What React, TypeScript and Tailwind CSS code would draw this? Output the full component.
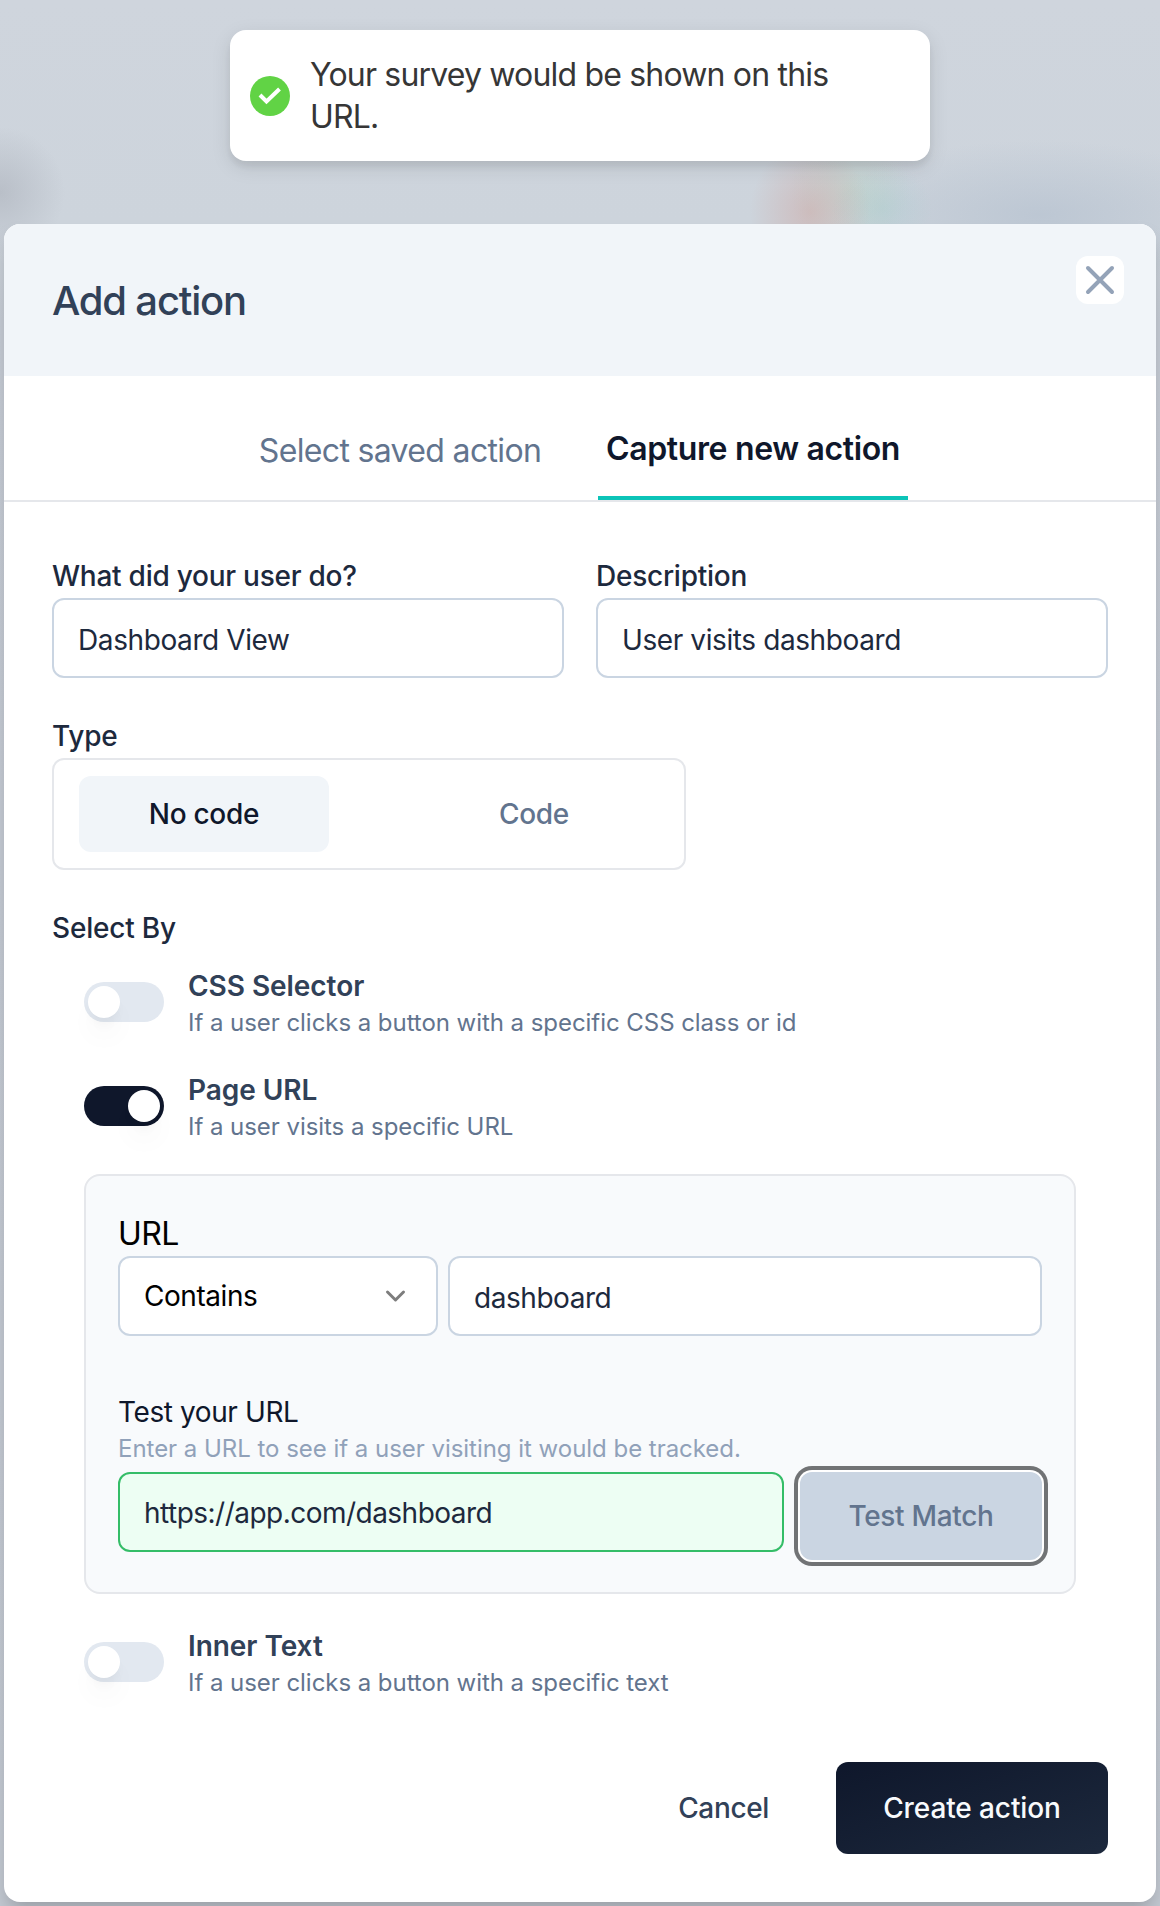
import React from "react";

function Toast() {
  return (
    <div className="flex h-[131px] w-[700px] shrink-0 items-center rounded-2xl bg-white pl-5 shadow-[0_6px_20px_rgba(0,0,0,0.1),0_6px_6px_rgba(0,0,0,0.06)]">
      <div className="flex h-10 w-10 shrink-0 items-center justify-center rounded-full bg-[#61d345]">
        <svg width="24" height="20" viewBox="0 0 24 20" fill="none">
          <path d="M2 9L8.5 15.5L21.5 3" stroke="white" strokeWidth="4" />
        </svg>
      </div>
      <p className="ml-5 w-[560px] text-[32px] leading-[42px] tracking-[-0.82px] text-[#363636]">
        Your survey would be shown on this URL.
      </p>
    </div>
  );
}

function Field({ label, value }: { label: string; value: string }) {
  return (
    <div className="w-[512px]">
      <div className="h-10 text-[28px] leading-10 font-medium tracking-[-0.25px] text-slate-800">
        {label}
      </div>
      <div className="mt-[2px] flex h-20 items-center rounded-xl border-2 border-slate-300 bg-white px-6 text-[28px] tracking-[-0.4px] text-slate-800">
        <span className="mt-[3px]">{value}</span>
      </div>
    </div>
  );
}

function Switch({ on }: { on?: boolean }) {
  return (
    <div
      className={
        on
          ? "flex h-10 w-20 shrink-0 items-center justify-end rounded-full bg-slate-900 p-1"
          : "flex h-10 w-20 shrink-0 items-center rounded-full bg-slate-200 p-1"
      }
    >
      <div className="h-8 w-8 rounded-full bg-white shadow-[0_20px_30px_-6px_rgba(0,0,0,0.07),0_8px_12px_-4px_rgba(0,0,0,0.05)]" />
    </div>
  );
}

function Option({ title, text, on }: { title: string; text: string; on?: boolean }) {
  return (
    <div className="flex h-[72px] items-center pl-8">
      <Switch on={on} />
      <div className="ml-6">
        <div className="h-[41px] text-[28px] leading-10 font-semibold tracking-[-0.05px] text-slate-700">
          {title}
        </div>
        <div className="h-[31px] text-[24px] leading-8 tracking-[-0.05px] text-slate-500">{text}</div>
      </div>
    </div>
  );
}

export default function App() {
  return (
    <div className="flex h-[1906px] w-[1160px] flex-col items-center overflow-hidden bg-[radial-gradient(60px_70px_at_810px_212px,rgba(206,165,160,0.5),transparent),radial-gradient(60px_60px_at_850px_190px,rgba(180,208,185,0.35),transparent),radial-gradient(50px_45px_at_882px_208px,rgba(165,205,208,0.4),transparent),radial-gradient(65px_65px_at_0px_192px,rgba(165,170,180,0.5),transparent),radial-gradient(210px_75px_at_1040px_215px,rgba(175,188,204,0.55),transparent),linear-gradient(#cfd5dd,#cdd4dc_224px,#c6ccd5_320px,#c3c9d2)] pt-[30px] font-['Inter',sans-serif]">
      <Toast />
      <div className="mt-[63px] h-[1678px] w-[1152px] shrink-0 overflow-hidden rounded-2xl bg-white shadow-[0_12px_20px_-4px_rgba(0,0,0,0.22)]">
        <header className="flex h-[152px] items-start justify-between bg-slate-100 pr-8 pl-12">
          <h1 className="mt-[49px] text-[40px] leading-[56px] font-medium tracking-[-1.2px] text-slate-700">
            Add action
          </h1>
          <button className="mt-8 flex h-12 w-12 items-center justify-center rounded-xl bg-white">
            <svg width="32" height="32" viewBox="0 0 32 32" fill="none">
              <path d="M4 4L28 28M28 4L4 28" stroke="#94a3b8" strokeWidth="4" strokeLinecap="round" />
            </svg>
          </button>
        </header>

        <nav className="flex h-[126px] items-end border-b-2 border-gray-200 pl-[241px]">
          <div className="flex h-[98px] w-[310px] items-center justify-center text-[32px] tracking-[-0.66px] text-slate-500">
            Select saved action
          </div>
          <div className="ml-[43px] flex h-[98px] w-[310px] items-center justify-center border-b-4 border-[#0cc4b8] text-[32px] font-semibold tracking-[-0.35px] text-slate-900">
            Capture new action
          </div>
        </nav>

        <div className="px-12 pt-[54px]">
          <div className="flex gap-8">
            <Field label="What did your user do?" value="Dashboard View" />
            <Field label="Description" value="User visits dashboard" />
          </div>

          <div className="mt-[38px] h-10 text-[28px] leading-10 font-medium tracking-[-0.25px] text-slate-800">
            Type
          </div>
          <div className="mt-[2px] flex h-28 w-[634px] items-center rounded-xl border-2 border-gray-200 pl-[25px] text-[28px] font-medium tracking-[-0.3px]">
            <div className="flex h-[76px] w-[250px] items-center justify-center rounded-xl bg-slate-100 text-slate-900">
              No code
            </div>
            <div className="ml-[80px] flex h-[76px] w-[250px] items-center justify-center text-slate-500">
              Code
            </div>
          </div>

          <div className="mt-[38px] mb-[18px] h-10 text-[28px] leading-10 font-medium tracking-[-0.2px] text-slate-800">
            Select By
          </div>
          <Option title="CSS Selector" text="If a user clicks a button with a specific CSS class or id" />
          <div className="h-8" />
          <Option title="Page URL" text="If a user visits a specific URL" on />

          <section className="mt-8 ml-8 h-[420px] w-[992px] rounded-2xl border-2 border-gray-200 bg-slate-50 px-8 pt-8">
            <div className="h-12 pt-[2px] text-[32px] leading-[48px] tracking-[-0.6px] text-black">URL</div>
            <div className="flex gap-[10px]">
              <div className="flex h-20 w-80 items-center justify-between rounded-xl border-2 border-slate-300 bg-white pr-7 pl-6 text-[28px] tracking-[-0.45px] text-black">
                Contains
                <svg width="24" height="14" viewBox="0 0 24 14" fill="none">
                  <path d="M3.5 3L11.5 11L19.5 3" stroke="#7d7d7d" strokeWidth="3" strokeLinecap="round" strokeLinejoin="round" />
                </svg>
              </div>
              <div className="flex h-20 w-[594px] items-center rounded-xl border-2 border-slate-300 bg-white px-6 text-[28px] tracking-[-0.45px] text-slate-800">
                <span className="mt-[3px]">dashboard</span>
              </div>
            </div>
            <div className="mt-14 h-[41px] text-[28px] leading-[41px] tracking-[-0.4px] text-slate-900">
              Test your URL
            </div>
            <div className="h-[31px] text-[24px] leading-8 tracking-[-0.03px] text-slate-400">
              Enter a URL to see if a user visiting it would be tracked.
            </div>
            <div className="mt-2 flex gap-4">
              <div className="flex h-20 w-[666px] items-center rounded-xl border-2 border-[#35bd68] bg-[#edfef3] px-6 text-[28px] tracking-[-0.52px] text-slate-800">
                <span className="mt-[2px]">https://app.com/dashboard</span>
              </div>
              <button className="flex h-[88px] w-[242px] items-center justify-center rounded-xl bg-slate-300 text-[28px] font-medium tracking-[-0.33px] text-slate-500 shadow-[0_0_0_2px_white,0_0_0_6px_#717375]">
                Test Match
              </button>
            </div>
          </section>

          <div className="h-8" />
          <Option title="Inner Text" text="If a user clicks a button with a specific text" />

          <div className="mt-16 flex justify-end text-[28px] font-medium">
            <button className="mr-[67px] tracking-[-0.35px] text-slate-700">Cancel</button>
            <button className="h-[92px] w-[272px] rounded-xl bg-gradient-to-br from-slate-900 to-slate-800 tracking-[-0.1px] text-slate-50">
              Create action
            </button>
          </div>
        </div>
      </div>
    </div>
  );
}
